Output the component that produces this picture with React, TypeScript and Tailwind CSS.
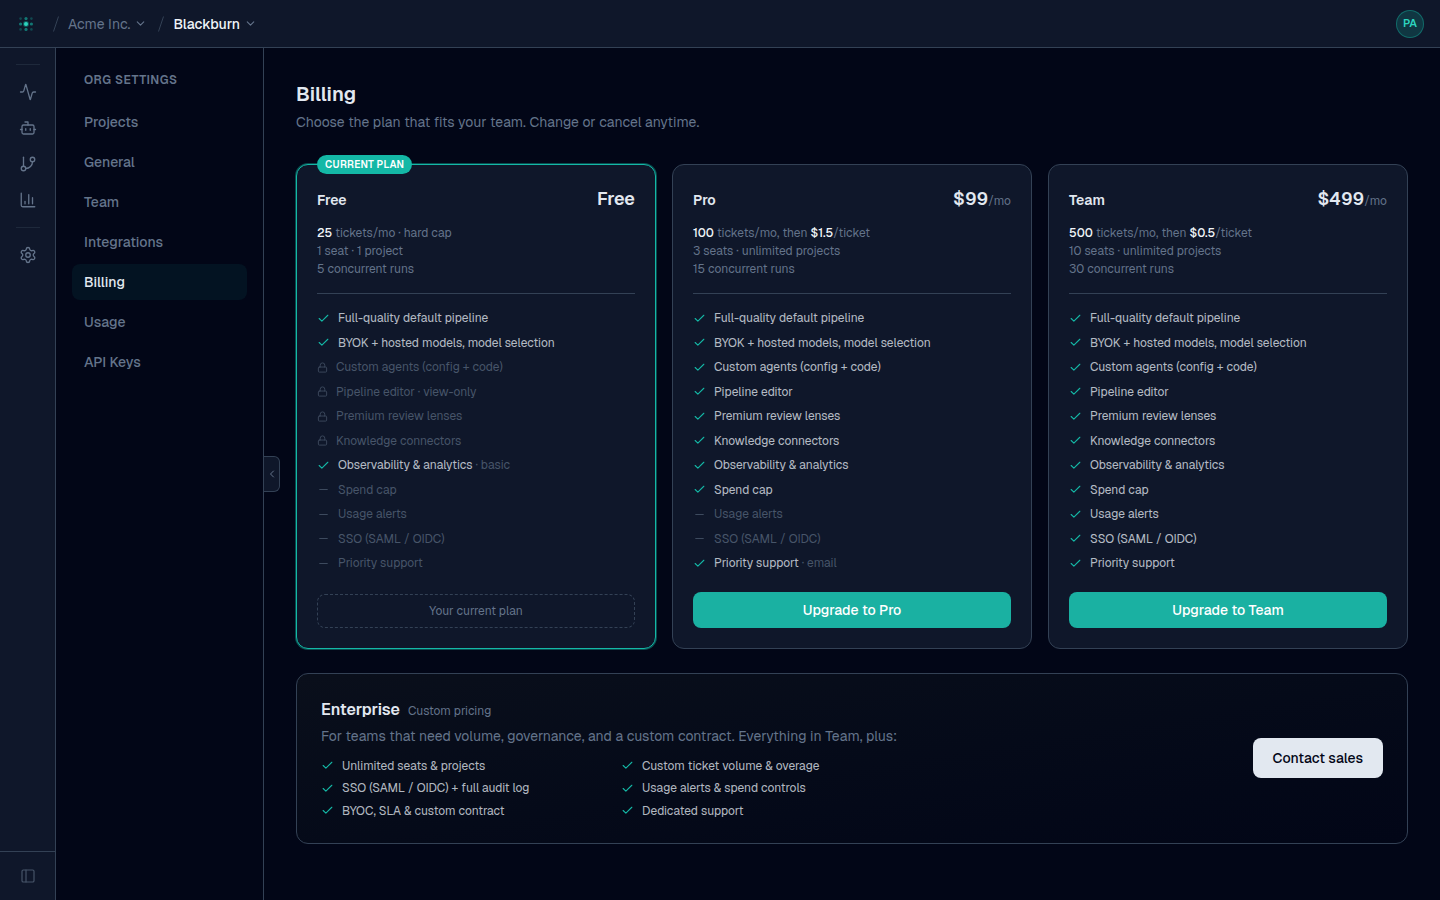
import { useState } from "react";
import type { ReactNode } from "react";
import {
  Activity,
  Bot,
  ChartColumn,
  Check,
  ChevronDown,
  ChevronLeft,
  GitBranch,
  Lock,
  Minus,
  PanelLeft,
  Settings,
} from "lucide-react";

type FeatureState = "yes" | "locked" | "no";

interface Feature {
  label: string;
  state: FeatureState;
  note?: string;
}

interface Plan {
  name: string;
  price: string;
  period?: string;
  allowance: ReactNode;
  seats: string;
  runs: string;
  current?: boolean;
  features: Feature[];
}

const FEATURE_LABELS = [
  "Full-quality default pipeline",
  "BYOK + hosted models, model selection",
  "Custom agents (config + code)",
  "Pipeline editor",
  "Premium review lenses",
  "Knowledge connectors",
  "Observability & analytics",
  "Spend cap",
  "Usage alerts",
  "SSO (SAML / OIDC)",
  "Priority support",
];

function buildFeatures(states: string, notes: Record<string, string> = {}): Feature[] {
  const byLetter: Record<string, FeatureState> = { y: "yes", l: "locked", n: "no" };
  return FEATURE_LABELS.map((label, i) => ({
    label,
    state: byLetter[states[i]],
    note: notes[label],
  }));
}

function Strong({ children }: { children: ReactNode }) {
  return <span className="font-medium text-[#f1f5f9]">{children}</span>;
}

const PLANS: Plan[] = [
  {
    name: "Free",
    price: "Free",
    allowance: (
      <>
        <Strong>25</Strong> tickets/mo · hard cap
      </>
    ),
    seats: "1 seat · 1 project",
    runs: "5 concurrent runs",
    current: true,
    features: buildFeatures("yyllllynnnn", {
      "Pipeline editor": "view-only",
      "Observability & analytics": "basic",
    }),
  },
  {
    name: "Pro",
    price: "$99",
    period: "/mo",
    allowance: (
      <>
        <Strong>100</Strong> tickets/mo, then <Strong>$1.5</Strong>/ticket
      </>
    ),
    seats: "3 seats · unlimited projects",
    runs: "15 concurrent runs",
    features: buildFeatures("yyyyyyyynny", { "Priority support": "email" }),
  },
  {
    name: "Team",
    price: "$499",
    period: "/mo",
    allowance: (
      <>
        <Strong>500</Strong> tickets/mo, then <Strong>$0.5</Strong>/ticket
      </>
    ),
    seats: "10 seats · unlimited projects",
    runs: "30 concurrent runs",
    features: buildFeatures("yyyyyyyyyyy"),
  },
];

const ENTERPRISE = [
  "Unlimited seats & projects",
  "Custom ticket volume & overage",
  "SSO (SAML / OIDC) + full audit log",
  "Usage alerts & spend controls",
  "BYOC, SLA & custom contract",
  "Dedicated support",
];

const NAV = ["Projects", "General", "Team", "Integrations", "Billing", "Usage", "API Keys"];

function Logo() {
  return (
    <svg viewBox="0 0 20 20" className="size-5" aria-hidden="true">
      <g fill="#14b8a6">
        <g opacity="0.3">
          <circle cx="4.6" cy="4.6" r="1.3" />
          <circle cx="15.4" cy="4.6" r="1.3" />
          <circle cx="4.6" cy="15.4" r="1.3" />
          <circle cx="15.4" cy="15.4" r="1.3" />
        </g>
        <g opacity="0.6">
          <circle cx="10" cy="4.6" r="1.6" />
          <circle cx="4.6" cy="10" r="1.6" />
          <circle cx="15.4" cy="10" r="1.6" />
          <circle cx="10" cy="15.4" r="1.6" />
        </g>
      </g>
      <circle cx="10" cy="10" r="3" fill="#14b8a6" opacity="0.4" />
      <circle cx="10" cy="10" r="2" fill="#2dd4bf" />
    </svg>
  );
}

function Slash() {
  return (
    <svg viewBox="0 0 8 16" className="mr-2 h-4 w-2" fill="none" stroke="#334155" aria-hidden="true">
      <path d="M6.5 0.5 1.5 15.5" />
    </svg>
  );
}

function RailButton({ label, children }: { label: string; children: ReactNode }) {
  return (
    <button
      type="button"
      aria-label={label}
      className="flex size-9 items-center justify-center rounded-md text-[#64748b] hover:text-[#cbd5e1]"
    >
      {children}
    </button>
  );
}

function FeatureRow({ feature }: { feature: Feature }) {
  const on = feature.state === "yes";
  return (
    <li className={`flex items-center gap-2 text-[12px] leading-snug ${on ? "text-[#e2e8f0]/80" : "text-[#475569]"}`}>
      {feature.state === "yes" && <Check className="size-[13px] shrink-0 text-[#14b8a6]" />}
      {feature.state === "locked" && <Lock className="size-[11px] shrink-0 text-[#3d4a5e]" />}
      {feature.state === "no" && <Minus className="size-[13px] shrink-0 text-[#3d4a5e]" />}
      <span>
        {feature.label}
        {feature.note && <span className="text-[#475569]"> · {feature.note}</span>}
      </span>
    </li>
  );
}

function PlanCard({ plan }: { plan: Plan }) {
  return (
    <article
      className={`relative flex flex-col rounded-xl border bg-[#0f172a] p-5 ${
        plan.current ? "border-[#14b8a6] ring-1 ring-[#14b8a6]/40" : "border-[#334155]"
      }`}
    >
      {plan.current && (
        <span className="absolute -top-[10px] left-5 rounded-full bg-[#14b8a6] px-2 py-[2px] text-[10px] leading-[15px] font-semibold tracking-wide text-white uppercase">
          Current plan
        </span>
      )}
      <div className="flex items-baseline justify-between">
        <h2 className="text-[14px] leading-5 font-semibold text-[#e2e8f0]">{plan.name}</h2>
        <p className="text-[18px] leading-[27px] font-semibold text-[#e2e8f0]">
          {plan.price}
          {plan.period && (
            <span className="text-[12px] leading-none font-normal text-[#64748b]">{plan.period}</span>
          )}
        </p>
      </div>
      <div className="mt-3 border-b border-[#334155] pb-[15px] text-[12px] leading-[18px] text-[#64748b]">
        <p>{plan.allowance}</p>
        <p>{plan.seats}</p>
        <p>{plan.runs}</p>
      </div>
      <ul className="mt-4 mb-5 flex flex-col gap-2">
        {plan.features.map((f) => (
          <FeatureRow key={f.label} feature={f} />
        ))}
      </ul>
      {plan.current ? (
        <div className="mt-auto flex h-[34px] items-center justify-center rounded-lg border border-dashed border-[#334155] text-[12px] text-[#64748b]">
          Your current plan
        </div>
      ) : (
        <button
          type="button"
          className="mt-auto flex h-9 items-center justify-center rounded-lg bg-[#1ab1a2] text-[14px] leading-5 font-medium text-white hover:bg-[#14b8a6]"
        >
          Upgrade to {plan.name}
        </button>
      )}
    </article>
  );
}

export default function App() {
  const [active, setActive] = useState("Billing");
  const [open, setOpen] = useState(true);

  return (
    <div className="flex min-h-screen flex-col bg-[#020617] font-['Geist','Inter',sans-serif] text-[#e2e8f0] antialiased">
      <header className="flex h-12 shrink-0 items-center justify-between border-b border-[#334155] bg-[#0f172a] px-4">
        <div className="flex items-center text-[14px] leading-5">
          <a href="#home" aria-label="Home" className="mr-4">
            <Logo />
          </a>
          <Slash />
          <button type="button" className="mr-[10px] flex items-center gap-1 text-[#64748b]">
            Acme Inc.
            <ChevronDown className="size-[13px]" />
          </button>
          <Slash />
          <button type="button" className="flex items-center gap-1 font-medium text-[#f1f5f9]">
            Blackburn
            <ChevronDown className="size-[13px] text-[#64748b]" />
          </button>
        </div>
        <button
          type="button"
          aria-label="Account"
          className="flex size-7 items-center justify-center rounded-full border border-[#14b8a6]/40 bg-[#14b8a6]/20 text-[11px] font-semibold text-[#2dd4bf]"
        >
          PA
        </button>
      </header>

      <div className="flex flex-1">
        <aside className="flex w-14 shrink-0 flex-col justify-between border-r border-[#334155] bg-[#0f172a]">
          <nav aria-label="Main" className="flex flex-col items-center pt-4">
            <hr className="mb-[9px] w-6 border-[#1e293b]" />
            <RailButton label="Activity">
              <Activity className="size-[18px]" strokeWidth={1.75} />
            </RailButton>
            <RailButton label="Agents">
              <Bot className="size-[18px]" strokeWidth={1.75} />
            </RailButton>
            <RailButton label="Pipelines">
              <GitBranch className="size-[18px]" strokeWidth={1.75} />
            </RailButton>
            <RailButton label="Analytics">
              <ChartColumn className="size-[18px]" strokeWidth={1.75} />
            </RailButton>
            <hr className="my-[9px] w-6 border-[#1e293b]" />
            <RailButton label="Settings">
              <Settings className="size-[18px]" strokeWidth={1.75} />
            </RailButton>
          </nav>
          <div className="flex h-[49px] items-center justify-center border-t border-[#334155]">
            <button type="button" aria-label="Toggle rail" className="text-[#475569]">
              <PanelLeft className="size-4" strokeWidth={1.75} />
            </button>
          </div>
        </aside>

        {open && (
          <aside className="w-52 shrink-0 border-r border-[#334155] p-4">
            <h2 className="mt-2 mb-4 px-3 text-[12px] leading-4 font-semibold tracking-wider text-[#64748b] uppercase">
              Org settings
            </h2>
            <nav aria-label="Organization settings" className="flex flex-col gap-1">
              {NAV.map((item) => (
                <a
                  key={item}
                  href={`#${item.toLowerCase().replace(" ", "-")}`}
                  aria-current={item === active ? "page" : undefined}
                  onClick={() => setActive(item)}
                  className={`flex h-9 items-center rounded-lg px-3 text-[14px] font-medium ${
                    item === active ? "bg-[#14b8a6]/8 text-[#e2e8f0]" : "text-[#64748b] hover:text-[#cbd5e1]"
                  }`}
                >
                  {item}
                </a>
              ))}
            </nav>
          </aside>
        )}

        <main className="relative min-w-0 flex-1 p-8">
          <button
            type="button"
            aria-label="Toggle settings menu"
            onClick={() => setOpen(!open)}
            className="absolute top-[calc(50%-18px)] left-0 flex h-9 w-4 items-center justify-center rounded-r-md border border-l-0 border-[#334155] bg-[#0f172a] text-[#64748b]"
          >
            <ChevronLeft className="size-3" />
          </button>

          <h1 className="text-[20px] leading-7 font-semibold text-[#e2e8f0]">Billing</h1>
          <p className="mt-1 text-[14px] leading-5 text-[#64748b]">
            Choose the plan that fits your team. Change or cancel anytime.
          </p>

          <div className="mt-8 grid grid-cols-3 gap-4">
            {PLANS.map((plan) => (
              <PlanCard key={plan.name} plan={plan} />
            ))}
          </div>

          <section className="mt-6 flex items-center justify-between rounded-xl border border-[#334155] bg-linear-to-br from-[#0a0f1b] to-[#020617] p-6">
            <div>
              <div className="flex items-baseline gap-2">
                <h2 className="text-[16px] leading-6 font-semibold text-[#e2e8f0]">Enterprise</h2>
                <span className="text-[12px] text-[#64748b]">Custom pricing</span>
              </div>
              <p className="mt-1 text-[14px] leading-5 text-[#64748b]">
                For teams that need volume, governance, and a custom contract. Everything in Team, plus:
              </p>
              <ul className="mt-3 grid max-w-xl grid-cols-2 gap-x-6 gap-y-[6px]">
                {ENTERPRISE.map((label) => (
                  <FeatureRow key={label} feature={{ label, state: "yes" }} />
                ))}
              </ul>
            </div>
            <button
              type="button"
              className="h-10 shrink-0 rounded-lg bg-[#e2e8f0] px-5 text-[14px] font-medium text-[#020617] hover:bg-white"
            >
              Contact sales
            </button>
          </section>
        </main>
      </div>
    </div>
  );
}
